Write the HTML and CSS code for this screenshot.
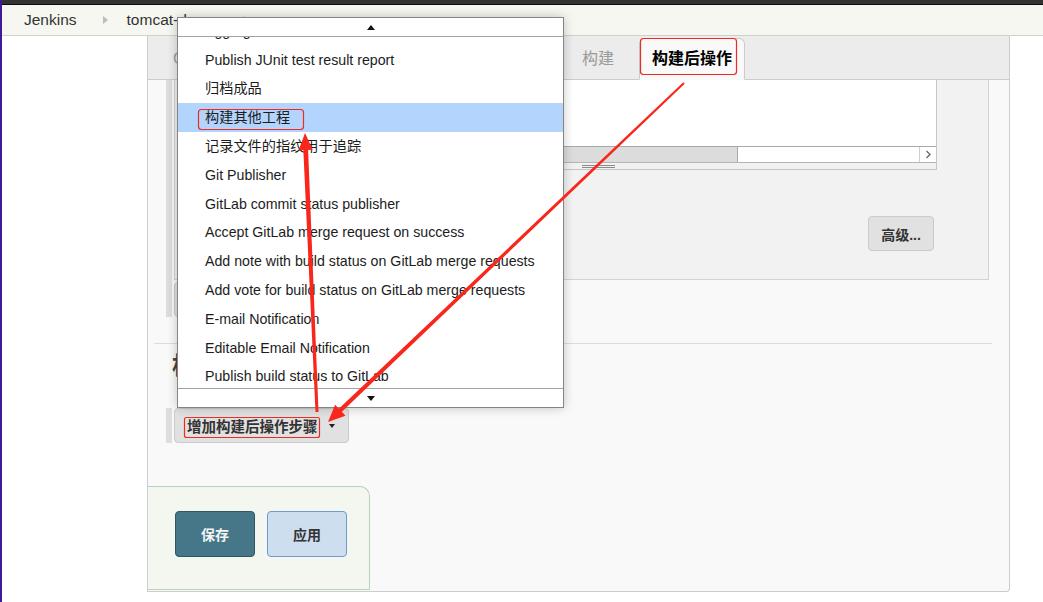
FILE: index.html
```html
<!DOCTYPE html>
<html lang="zh">
<head>
<meta charset="utf-8">
<title>tomcat-demo Config [Jenkins]</title>
<link rel="stylesheet" href="styles.css">
</head>
<body>
<div class="page">
  <div class="topbar"></div>
  <nav class="breadcrumb">
    <span class="crumb">Jenkins</span>
    <span class="crumb-sep"></span>
    <span class="crumb">tomcat-demo</span>
    <span class="crumb-sep"></span>
  </nav>
  <div class="main">
    <div class="panel">
      <div class="tabbar">
        <span class="tab">General</span>
        <span class="tab">源码管理</span>
        <span class="tab">构建触发器</span>
        <span class="tab">构建环境</span>
        <span class="tab">构建</span>
        <span class="tab active">构建后操作</span>
      </div>
      <div class="content">
        <div class="chunk">
          <div class="stripe"></div>
          <div class="chunk-body">
            <div class="section">
              <div class="editor">
                <div class="editor-area"></div>
                <div class="hscroll">
                  <div class="thumb"></div>
                  <div class="track"></div>
                  <div class="scroll-btn">
                    <svg width="7" height="9" viewBox="0 0 7 9"><polyline points="1.5,1 5,4.5 1.5,8" fill="none" stroke="#666" stroke-width="1.3"/></svg>
                  </div>
                </div>
                <div class="grip"><span class="grip-lines"></span></div>
              </div>
              <div class="advanced-row"><button class="btn btn-adv">高级...</button></div>
            </div>
            <button class="btn btn-delete">删除</button>
          </div>
        </div>
        <hr class="separator">
        <h2 class="section-title">构建后操作</h2>
        <div class="add-row">
          <div class="stripe"></div>
          <button class="btn btn-add">增加构建后操作步骤<span class="caret"></span></button>
        </div>
        <div class="savebar">
          <button class="btn-save">保存</button>
          <button class="btn-apply">应用</button>
        </div>
      </div>
    </div>
  </div>
</div>

<div class="dropdown">
  <div class="dd-arrow dd-top"><span class="tri-up"></span></div>
  <div class="dd-list">
    <ul class="dd-items">
      <li>Aggregate downstream test results</li>
      <li>Publish JUnit test result report</li>
      <li>归档成品</li>
      <li class="selected">构建其他工程</li>
      <li>记录文件的指纹用于追踪</li>
      <li>Git Publisher</li>
      <li>GitLab commit status publisher</li>
      <li>Accept GitLab merge request on success</li>
      <li>Add note with build status on GitLab merge requests</li>
      <li>Add vote for build status on GitLab merge requests</li>
      <li>E-mail Notification</li>
      <li>Editable Email Notification</li>
      <li>Publish build status to GitLab</li>
      <li>Set GitLab commit status</li>
    </ul>
  </div>
  <div class="dd-arrow dd-bottom"><span class="tri-down"></span></div>
</div>

<svg class="annotations" width="1043" height="602" viewBox="0 0 1043 602">
  <g fill="none" stroke="#ee2a22" stroke-width="1.2">
    <rect x="640.5" y="38.5" width="96" height="36" rx="3"/>
    <rect x="198.5" y="109.5" width="105" height="20" rx="3"/>
    <rect x="184.5" y="417.5" width="135" height="20" rx="2"/>
  </g>
  <g fill="#f8261b">
    <polygon points="684.69,83.72 341.83,411.87 345.48,415.71 328,422 335.14,404.85 338.79,408.68 683.31,82.28"/>
    <polygon points="318.50,411.94 308.13,149.88 312.72,149.68 305,133 298.74,150.29 303.33,150.09 315.50,412.06"/>
  </g>
</svg>
</body>
</html>
```

FILE: styles.css
```css
* {
  box-sizing: border-box;
}

html,
body {
  margin: 0;
  padding: 0;
}

body {
  width: 1043px;
  height: 602px;
  overflow: hidden;
  position: relative;
  background: #fff;
  color: #333;
  font-family: "Liberation Sans", "Noto Sans CJK SC", sans-serif;
  font-size: 14px;
}

.page {
  border-left: 2px solid #3d1b98;
  min-height: 602px;
}

.topbar {
  height: 5px;
  background: #333;
  border-bottom: 1px solid #0d0d0d;
}

/* breadcrumb */
.breadcrumb {
  height: 31px;
  display: flex;
  align-items: center;
  padding-left: 22px;
  background: #f5f7f0;
  border-bottom: 1px solid #cfcfcf;
  font-size: 15.5px;
  color: #333;
}

.crumb-sep {
  width: 0;
  height: 0;
  border-left: 5px solid #bcbcbc;
  border-top: 4px solid transparent;
  border-bottom: 4px solid transparent;
  margin: 0 19px 0 26px;
}

/* main panel */
.main {
  padding-left: 145px;
}

.panel {
  width: 863px;
  background: #f9f9f9;
  border: 1px solid #cccccc;
  border-top: none;
  border-bottom-right-radius: 4px;
  padding-bottom: 1px;
}

.tabbar {
  height: 44px;
  display: flex;
  align-items: flex-end;
  gap: 10px;
  padding-left: 12px;
  background: #ececec;
  border-bottom: 1px solid #cccccc;
}

.tab {
  height: 42px;
  margin-bottom: -1px;
  padding: 0 12px;
  line-height: 40px;
  font-size: 16px;
  color: #9a9a9a;
  border: 1px solid transparent;
  border-radius: 6px 6px 0 0;
  white-space: nowrap;
}

.tab.active {
  margin-left: 2px;
  background: #f9f9f9;
  border-color: #cccccc;
  border-bottom-color: #f9f9f9;
  color: #000;
  font-weight: bold;
}

/* repeated chunk */
.chunk {
  display: flex;
  margin-left: 18px;
}

.stripe {
  width: 6px;
  background: #dddddd;
}

.chunk-body {
  margin-left: 2px;
  width: 815px;
}

.section {
  background: #f2f2f2;
  border: 1px solid #d3d3d3;
  border-top: none;
  padding-bottom: 28px;
}

.editor {
  margin: 0 51px 0 20px;
  background: #fff;
  border: 1px solid #c6c6c6;
  border-top: none;
}

.editor-area {
  height: 66px;
}

.hscroll {
  height: 17px;
  display: flex;
  border-top: 1px solid #a9a9a9;
  border-bottom: 1px solid #b5b5b5;
}

.thumb {
  width: 542px;
  background: #dcdcdc;
  border-right: 1px solid #a9a9a9;
}

.track {
  flex: 1;
  background: #fff;
}

.scroll-btn {
  width: 17px;
  border-left: 1px solid #cfcfcf;
  display: flex;
  align-items: center;
  justify-content: center;
  background: #fff;
}

.grip {
  height: 6px;
  background: #f1f1f1;
  padding: 2px 0 0 386px;
}

.grip-lines {
  display: block;
  width: 33px;
  height: 3px;
  border-top: 1px solid #8a8a8a;
  border-bottom: 1px solid #8a8a8a;
}

.advanced-row {
  display: flex;
  justify-content: flex-end;
  margin-top: 46px;
  padding-right: 54px;
}

.btn {
  height: 35px;
  background: #e1e1e1;
  border: 1px solid #cbcbcb;
  border-radius: 4px;
  color: #333;
  font-family: "Liberation Sans", "Noto Sans CJK SC", sans-serif;
  font-size: 14px;
  font-weight: bold;
  padding: 0;
}

.btn-adv {
  width: 66px;
}

.btn-delete {
  display: block;
  margin-top: 2px;
  width: 60px;
}

.separator {
  margin: 26px 0 0 6px;
  width: 838px;
  height: 0;
  border: 0;
  border-top: 1px solid #dcdcdc;
}

.section-title {
  margin: 7px 0 0 24px;
  font-size: 24px;
  line-height: 30px;
  font-weight: bold;
  color: #444;
}

.add-row {
  display: flex;
  margin: 27px 0 0 18px;
  height: 35px;
}

.btn-add {
  margin-left: 2px;
  width: 175px;
  text-align: left;
  padding-left: 12px;
  font-size: 14.5px;
  display: flex;
  align-items: center;
}

.caret {
  width: 0;
  height: 0;
  margin-left: 11px;
  border-left: 3.5px solid transparent;
  border-right: 3.5px solid transparent;
  border-top: 4px solid #222;
}

/* save bar */
.savebar {
  margin-top: 43px;
  width: 222px;
  height: 104px;
  display: flex;
  gap: 12px;
  padding: 24px 0 0 27px;
  background: #f4f7f0;
  border: 1px solid #b6d4bd;
  border-left: none;
  border-top-right-radius: 10px;
}

.btn-save,
.btn-apply {
  width: 80px;
  height: 46px;
  border-radius: 4px;
  font-family: "Liberation Sans", "Noto Sans CJK SC", sans-serif;
  font-size: 14px;
  font-weight: bold;
  padding: 0;
}

.btn-save {
  background: #467789;
  border: 1px solid #2e5665;
  color: #f4f4f4;
}

.btn-apply {
  background: #cddeee;
  border: 1px solid #6d9bd0;
  color: #333;
}

/* dropdown menu overlay */
.dropdown {
  position: absolute;
  left: 177px;
  top: 17px;
  width: 387px;
  height: 391px;
  background: #fff;
  border: 1px solid #858585;
  box-shadow: 0 0 10px rgba(0, 0, 0, 0.22);
  display: flex;
  flex-direction: column;
}

.dd-arrow {
  height: 19px;
  display: flex;
  align-items: center;
  justify-content: center;
  background: #fff;
}

.dd-top {
  border-bottom: 1px solid #a3a3a3;
}

.dd-bottom {
  border-top: 1px solid #a3a3a3;
}

.tri-up {
  width: 0;
  height: 0;
  border-left: 4.5px solid transparent;
  border-right: 4.5px solid transparent;
  border-bottom: 5px solid #111;
}

.tri-down {
  width: 0;
  height: 0;
  border-left: 4.5px solid transparent;
  border-right: 4.5px solid transparent;
  border-top: 5px solid #111;
}

.dd-list {
  height: 351px;
  overflow: hidden;
}

.dd-items {
  list-style: none;
  margin: -20.2px 0 0;
  padding: 0;
}

.dd-items li {
  height: 28.8px;
  line-height: 28.8px;
  padding-left: 27px;
  font-size: 14.2px;
  color: #1c1c1c;
  white-space: nowrap;
}

.dd-items li.selected {
  background: #b3d4fc;
}

/* screenshot annotations */
.annotations {
  position: absolute;
  left: 0;
  top: 0;
  pointer-events: none;
}
```
